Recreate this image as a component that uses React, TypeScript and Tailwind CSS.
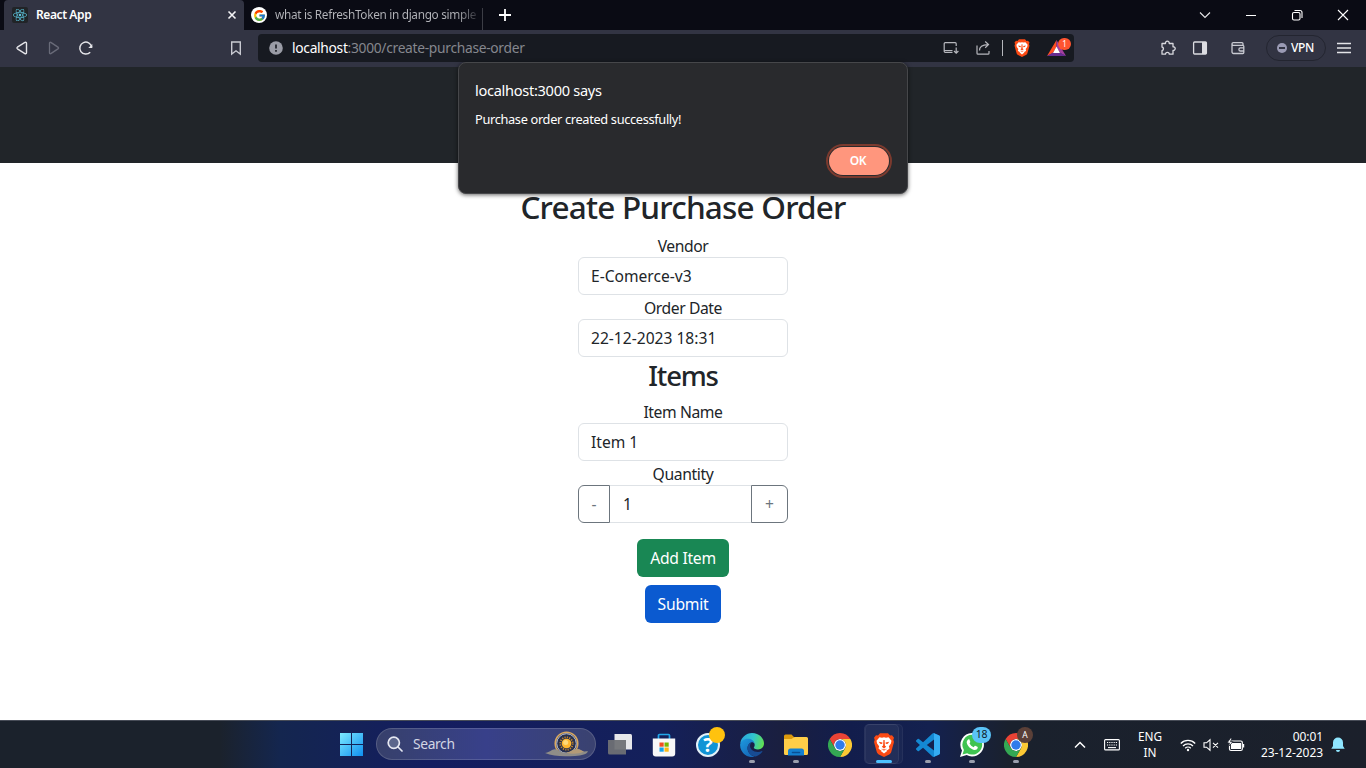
import type { ReactNode } from 'react';
import { FaReact } from 'react-icons/fa';
import { FcGoogle } from 'react-icons/fc';

function BraveIcon({ className }: { className: string }) {
  return (
    <svg viewBox="0 0 24 24" className={className}>
      <path fill="#fb4a14" d="M8 .3h8l2 2.200 2-.3 2 2.600-.7 2 .7 2.200-2.700 9.700c-.4 1.400-1.100 2-2.100 2.700L12 23.900l-5.200-2.500c-1-.7-1.700-1.300-2.100-2.700L2 9l.7-2.200-.7-2 2-2.600 2 .3z" />
      <path fill="#fff" d="M7.500 4.200l2.500.5 2-.5 2 .5 2.500-.5 3 3.600-.6 2.700-2 2.700.6 2.300-2 1.800-1.300-.7 1 1.500L12 20.500l-3.200-2.400 1-1.500-1.300.7-2-1.800.6-2.300-2-2.700-.6-2.700z" />
      <path fill="#fb4a14" d="M6.800 8.700l3.700.7-.4 1.700-2-.4zM17.200 8.700l-3.700.7.400 1.700 2-.4zM11.400 7h1.200l.3 5.500 1.300 1.300L12 15.400l-2.200-1.600 1.300-1.300zM9.300 15.400l2.700 1.200 2.700-1.200-2.700 2.300z" />
    </svg>
  );
}

function ChromeIcon() {
  return (
    <svg viewBox="0 0 48 48" className="size-6">
      <circle cx="24" cy="24" r="12" fill="#fff" />
      <path fill="#ea4335" d="M24,12H44.7812a23.9939,23.9939,0,0,0-41.5639.0029L13.6079,30l.0093-.0024A11.9852,11.9852,0,0,1,24,12Z" />
      <path fill="#fcc934" d="M34.3913,30.0029,24.0007,48A23.994,23.994,0,0,0,44.78,12.0031H23.9989l-.0025.0093A11.985,11.985,0,0,1,34.3913,30.0029Z" />
      <path fill="#34a853" d="M13.6086,30.0031,3.218,12.006A23.994,23.994,0,0,0,24.0025,48L34.3931,30.0029l-.0067-.0068a11.9852,11.9852,0,0,1-20.7778.007Z" />
      <circle cx="24" cy="24" r="9.5" fill="#2f7bea" />
    </svg>
  );
}

function EdgeIcon() {
  return (
    <svg viewBox="0 0 24 24" className="size-6">
      <defs>
        <linearGradient id="edgeTop" x1="0" y1="0.4" x2="1" y2="0.6">
          <stop offset="0" stopColor="#2aa5dd" />
          <stop offset="0.5" stopColor="#31c6cf" />
          <stop offset="1" stopColor="#62e04e" />
        </linearGradient>
        <linearGradient id="edgeBottom" x1="0" y1="0" x2="0.7" y2="1">
          <stop offset="0" stopColor="#1d9be0" />
          <stop offset="1" stopColor="#1567b8" />
        </linearGradient>
      </defs>
      <path fill="url(#edgeTop)" d="M.3 10.2C1.2 4.300 6.100 0 12 0c7.300 0 12 5.300 12 10.600 0 3.600-2.700 5.900-6 5.900-2.800 0-4.200-1-4.200-1.900 0-.6.900-.9.900-2.600C14.700 9.500 12 7.100 8.400 7.100 4.800 7.100 1.700 8.500.3 10.200z" />
      <path fill="url(#edgeBottom)" d="M.1 12.100C.3 8.400 3.800 5.700 8 5.700c3.400 0 6.100 2 6.600 5-.8-1.200-1.900-1.700-3-1.500C9.200 9.900 7.500 12.500 7.500 15c0 4.200 3.200 7.500 7.200 8.700A12 12 0 0 1 .1 12.100z" />
      <path fill="#174b93" d="M11.300 9.300C8.900 10.400 7.500 12.500 7.500 15c0 4.700 4 8.200 8.300 8.400 3.200-.8 5.400-3 6.600-4.800.2-.4-.1-.7-.5-.5-1.200.6-2.500.9-4 .9-4.900 0-8.300-3.300-7.800-6.700.2-1.200.8-2.200 1.200-3z" />
    </svg>
  );
}

function FolderIcon() {
  return (
    <svg viewBox="0 0 24 24" className="size-6">
      <path fill="#dd9a0c" d="M0 3a1.500 1.500 0 0 1 1.500-1.500h6L10 4v3H0z" />
      <path fill="#ffce48" d="M0 6h7.500l3-2H22.500A1.500 1.500 0 0 1 24 5.500v15a1.500 1.500 0 0 1-1.500 1.500h-21A1.500 1.500 0 0 1 0 20.500z" />
      <path fill="#1480d0" d="M4 22.500V18a2.500 2.500 0 0 1 2.500-2.500h11A2.500 2.500 0 0 1 20 18v4.500z" />
      <path stroke="#0a4f93" strokeWidth="1.600" strokeLinecap="round" d="M8.500 19.500h7" />
    </svg>
  );
}

function StoreIcon() {
  return (
    <svg viewBox="0 0 24 24" className="size-6">
      <path d="M6.500 6V2.500a1 1 0 0 1 1-1h9a1 1 0 0 1 1 1V6" fill="none" stroke="#22a7ea" strokeWidth="1.700" />
      <path fill="#f7f7f8" d="M.8 5.500h22.400v15A3 3 0 0 1 20.200 23.500H3.800a3 3 0 0 1-3-3z" />
      <path fill="#f04e23" d="M7.500 9.500h4.200v4.200H7.500z" />
      <path fill="#7ab800" d="M12.500 9.500h4.200v4.200h-4.200z" />
      <path fill="#15a3ec" d="M7.500 14.500h4.200v4.200H7.500z" />
      <path fill="#fdb813" d="M12.500 14.500h4.200v4.200h-4.200z" />
    </svg>
  );
}

function VsCodeIcon() {
  return (
    <svg viewBox="0 0 24 24" className="size-6">
      <path
        fill="#1489d3"
        d="M23.15 2.587L18.21.21a1.494 1.494 0 0 0-1.705.29l-9.46 8.63-4.12-3.128a.999.999 0 0 0-1.276.057L.327 7.261A1 1 0 0 0 .326 8.74L3.899 12 .326 15.26a1 1 0 0 0 .001 1.479L1.65 17.94a.999.999 0 0 0 1.276.057l4.12-3.128 9.46 8.63a1.492 1.492 0 0 0 1.704.29l4.942-2.377A1.5 1.5 0 0 0 24 20.06V3.939a1.5 1.5 0 0 0-.85-1.352zm-5.146 14.861L10.826 12l7.178-5.448v10.896z"
      />
      <path fill="#35adf3" d="M18.004.15l5.146 2.437A1.500 1.500 0 0 1 24 3.940v16.120a1.500 1.500 0 0 1-.85 1.350l-5.146 2.440z" />
    </svg>
  );
}

function WeatherIcon() {
  return (
    <svg viewBox="0 0 44 26" className="h-[26px] w-[44px]">
      <circle cx="21.500" cy="12.500" r="11.300" fill="#27304f" stroke="#d9a860" strokeWidth="1.500" />
      <circle cx="21.500" cy="12.500" r="9.800" fill="none" stroke="#cfd6ea" strokeWidth="0.900" />
      <circle cx="21.500" cy="12.500" r="6.200" fill="none" stroke="#c9872a" strokeWidth="1.800" strokeDasharray="1.200 1.200" />
      <circle cx="21.500" cy="12.500" r="4.800" fill="#ffb62e" />
      <circle cx="20.700" cy="11.500" r="2.500" fill="#ffd978" />
      <path d="M0 22c3-.6 5-1.800 7-3 3-1.500 5-.5 7 .7 3 1.600 6 2.800 10 1.200 4-1.700 5-2.900 8-3 3 0 4 1.500 6 2.300 2 .6 3 0 5 .1-1 3-6 4.200-13 4.600-10 .6-22 .8-30-2.900z" fill="#8f8d88" />
      <path d="M21 21.500c5-.4 6-3.500 11-3.600 3 .1 4 1.800 7 2.500-5 2.400-12 3.100-18 1.100z" fill="#b49b77" />
    </svg>
  );
}

function TaskCell({ children, mark }: { children: ReactNode; mark?: 'idle' | 'active' }) {
  return (
    <div className="relative flex h-full w-11 shrink-0 items-center justify-center">
      {children}
      {mark === 'idle' && <span className="absolute bottom-[5px] left-[19px] h-[3px] w-1.5 rounded-full bg-[#9a9fad]" />}
      {mark === 'active' && <span className="absolute bottom-[5px] left-[14px] h-[3px] w-4 rounded-full bg-[#4cc2ff]" />}
    </div>
  );
}

function TitleBar() {
  return (
    <header className="flex h-[30px] bg-[#0a0b14] pl-1">
      <div className="flex w-60 items-center rounded-t-[4px] bg-[#323443] pl-2 pr-[6px]">
        <span className="grid size-4 place-items-center rounded-[2px] bg-[#212427]">
          <FaReact className="size-[14px] text-[#5cc3dc]" />
        </span>
        <span className="ml-2 flex-1 whitespace-nowrap text-[12px] font-semibold tracking-[-0.4px] text-white">React App</span>
        <svg viewBox="0 0 12 12" className="size-3" stroke="#f4f4f6" strokeWidth="1.600">
          <path d="M2.500 2.500l7 7M9.500 2.500l-7 7" />
        </svg>
      </div>
      <div className="flex w-[239px] items-center pl-[7px]">
        <span className="grid size-4 shrink-0 place-items-center rounded-full bg-white">
          <FcGoogle className="size-[13px]" />
        </span>
        <span className="ml-2 flex-1 whitespace-nowrap bg-linear-to-r from-[#b4b5ba] from-90% to-[#b4b5ba]/20 bg-clip-text text-[11.8px] tracking-[-0.31px] text-transparent">
          what is RefreshToken in django simple
        </span>
        <span className="ml-[5px] mt-2 h-[22px] w-px bg-[#3c3d45]" />
      </div>
      <svg viewBox="0 0 12 12" className="ml-4 mt-[9px] size-3" stroke="#fff" strokeWidth="1.800">
        <path d="M6 0v12M0 6h12" />
      </svg>
      <div className="ml-auto flex text-white">
        <span className="grid w-[46px] place-items-center">
          <svg viewBox="0 0 12 8" className="h-2 w-3" fill="none" stroke="#e8e8ea" strokeWidth="1.100"><path d="M1 1.500l5 5 5-5" /></svg>
        </span>
        <span className="grid w-[46px] place-items-center"><span className="h-px w-2.5 bg-white" /></span>
        <span className="grid w-[46px] place-items-center">
          <svg viewBox="0 0 12 12" className="size-3" fill="none" stroke="#fff" strokeWidth="1.100">
            <rect x="1.500" y="3.500" width="7.500" height="7.500" rx="1.500" />
            <path d="M3.500 1.500h5.500a2 2 0 0 1 2 2V9" />
          </svg>
        </span>
        <span className="grid w-[46px] place-items-center">
          <svg viewBox="0 0 12 12" className="size-3" stroke="#fff" strokeWidth="1.100"><path d="M1 1l10 10M11 1L1 11" /></svg>
        </span>
      </div>
    </header>
  );
}

function Toolbar() {
  return (
    <div className="flex h-[37px] items-center bg-[#323443] pb-px pl-[6px]">
      <span className="grid w-8 place-items-center">
        <svg viewBox="0 0 14 16" className="h-4 w-3.5" fill="none" stroke="#e4e4e8" strokeWidth="1.400" strokeLinejoin="round">
          <path d="M11.500 3.200v9.600a1 1 0 0 1-1.600.8L2.400 8.800a1 1 0 0 1 0-1.600l7.500-4.800a1 1 0 0 1 1.600.8z" />
        </svg>
      </span>
      <span className="grid w-8 place-items-center">
        <svg viewBox="0 0 14 16" className="h-4 w-3.5" fill="none" stroke="#696b79" strokeWidth="1.300" strokeLinejoin="round">
          <path d="M2.500 3v10a.8.800 0 0 0 1.300.6l7.500-5a.8.800 0 0 0 0-1.200l-7.500-5A.8.800 0 0 0 2.500 3z" />
        </svg>
      </span>
      <span className="grid w-8 place-items-center">
        <svg viewBox="0 0 16 16" className="size-4" fill="none" stroke="#e4e4e8" strokeWidth="1.500">
          <path d="M12.200 12.200A6 6 0 1 1 13.700 7" />
          <path d="M14.300 4v4h-4z" fill="#e4e4e8" stroke="none" />
        </svg>
      </span>
      <span className="ml-[118px] grid w-8 place-items-center">
        <svg viewBox="0 0 12 16" className="h-4 w-3" fill="none" stroke="#c9cad2" strokeWidth="1.400"><path d="M1.700 2h8.600v12L6 10.800 1.700 14z" /></svg>
      </span>
      <div className="ml-[6px] flex h-7 w-[816px] items-center rounded-[4px] bg-[#171a21] pl-[11px] pr-0.5">
        <svg viewBox="0 0 14 14" className="size-3.5"><circle cx="7" cy="7" r="6.800" fill="#9a9ca6" /><path d="M7 3.500v4M7 9v1.700" stroke="#171a21" strokeWidth="1.600" /></svg>
        <span className="ml-[9px] flex-1 text-[13.8px] tracking-[-0.3px] text-[#85878e]"><span className="text-white">localhost</span>:3000/create-purchase-order</span>
        <svg viewBox="0 0 16 14" className="h-3.5 w-4" fill="none" stroke="#b6b7bd" strokeWidth="1.200">
          <path d="M9.500 11.300H2.200a1 1 0 0 1-1-1V2.700a1 1 0 0 1 1-1h10a1 1 0 0 1 1 1V5M1.500 9.500h8M13.200 6.500v5.500M11 10l2.200 2.200L15.400 10" />
        </svg>
        <svg viewBox="0 0 16 16" className="ml-4 size-4" fill="none" stroke="#b6b7bd" strokeWidth="1.200">
          <path d="M2 5.500v7.700a1 1 0 0 0 1 1h10a1 1 0 0 0 1-1V11M4.500 10.500C4.500 7 7 4.600 13 4.600M10.200 1.500l3.300 3.100-3.300 3.100" />
        </svg>
        <span className="ml-[11px] h-4 w-px bg-[#b6b7bd]" />
        <BraveIcon className="ml-[10px] h-[18px] w-[18px]" />
        <span className="relative ml-4 h-[18px] w-[25px]">
          <svg viewBox="0 0 20 18" className="h-[18px] w-5">
            <path fill="#ff4e22" d="M9.500 1L0 17l6-3 3.500-6z" />
            <path fill="#a33fa0" d="M9.500 1L19 17l-6-3-3.500-6z" />
            <path fill="#662d91" d="M0 17h19l-6-3.500H6z" />
            <path fill="#fff" d="M9.500 7.500L13 14H6z" />
          </svg>
          <span className="absolute -top-px left-[11px] grid h-3 w-[13px] place-items-center rounded-full bg-[#ff5430] text-[8px] leading-none text-white">1</span>
        </span>
      </div>
      <svg viewBox="0 0 16 16" className="ml-[86px] size-4" fill="none" stroke="#d8d8de" strokeWidth="1.300" strokeLinejoin="round">
        <path d="M2 3.500h3.500a1.900 1.900 0 1 1 3.700 0H13v3.300a1.800 1.800 0 1 1 0 3.500v3.900H9.300a1.900 1.900 0 0 0-3.800 0H2v-3.500a1.900 1.900 0 0 0 0-3.700z" />
      </svg>
      <svg viewBox="0 0 16 14" className="ml-4 h-3.5 w-4"><rect x="1.600" y="1" width="12.800" height="12" rx="1" fill="none" stroke="#dcdce1" strokeWidth="1.300" /><path d="M10 1h4.500v12H10z" fill="#dcdce1" /></svg>
      <svg viewBox="0 0 16 14" className="ml-[22px] h-3.5 w-4" fill="none" stroke="#c9cad2" strokeWidth="1.300">
        <path d="M13 4V2.700a1 1 0 0 0-1-1H3.300a1.300 1.300 0 0 0 0 2.600h9.500a1 1 0 0 1 1 1v6.200a1 1 0 0 1-1 1H3.500A1.500 1.500 0 0 1 2 11V3M14 6.800h-3.500a1.600 1.600 0 0 0 0 3.200H14" />
      </svg>
      <div className="ml-5 flex h-[26px] w-[60px] items-center rounded-full border border-[#232530] pl-[10px]">
        <span className="grid size-2.5 place-items-center rounded-full bg-[#9a9ab4]"><span className="h-[1.500px] w-1.5 bg-[#323443]" /></span>
        <span className="ml-1 text-[12px] font-medium tracking-[-0.4px] text-white">VPN</span>
      </div>
      <svg viewBox="0 0 14 12" className="ml-[11px] h-3 w-3.5" stroke="#e4e4e8" strokeWidth="1.300"><path d="M0 1.500h14M0 6h14M0 10.500h14" /></svg>
    </div>
  );
}

function Dialog() {
  return (
    <div role="alertdialog" className="absolute left-[458px] top-[62px] h-[132px] w-[450px] rounded-[8px] border border-[#46474a] bg-[#292a2d] pl-4 pr-[15px] pt-[17px] text-white shadow-[0_1px_4px_rgba(0,0,0,0.6)]">
      <p className="text-[14.6px] leading-[20px] tracking-[-0.3px]">localhost:3000 says</p>
      <p className="mt-[10px] text-[12.8px] leading-[18px] tracking-[-0.34px]">Purchase order created successfully!</p>
      <div className="mt-4 flex justify-end">
        <button className="h-[34px] w-[66px] rounded-full border-2 border-[#7b3a2e] p-px">
          <span className="grid h-full w-full place-items-center rounded-full bg-[#ff967d] pr-0.5 text-[12px] font-semibold tracking-[-0.4px] text-white">OK</span>
        </button>
      </div>
    </div>
  );
}

function Field({ label, value }: { label: string; value: string }) {
  return (
    <div className="w-[210px]">
      <div className="h-6 text-center text-[15.7px] leading-[26px] tracking-[-0.42px]">{label}</div>
      <div className="flex h-[38px] items-center rounded-[6px] border border-[#dee2e6] pl-3 pt-0.5 text-[15.6px]">{value}</div>
    </div>
  );
}

function OrderForm() {
  return (
    <main className="flex h-[557px] flex-col items-center bg-white pt-6 text-[#212529]">
      <h2 className="mb-2 h-[38px] text-[31.5px] font-medium leading-[40px] tracking-[-0.8px]">Create Purchase Order</h2>
      <Field label="Vendor" value="E-Comerce-v3" />
      <Field label="Order Date" value="22-12-2023 18:31" />
      <h3 className="mb-2 h-[34px] text-[27.5px] font-medium leading-[37px] tracking-[-1.2px]">Items</h3>
      <Field label="Item Name" value="Item 1" />
      <div className="h-6 text-[15.7px] leading-[26px] tracking-[-0.35px]">Quantity</div>
      <div className="flex h-[38px] w-[210px] text-[15.6px]">
        <button className="w-8 rounded-l-[6px] border border-[#6c757d] pt-0.5 text-[#6c757d]">-</button>
        <div className="flex flex-1 items-center border-y border-[#dee2e6] pl-[13px] pt-0.5">1</div>
        <button className="w-[37px] rounded-r-[6px] border border-[#6c757d] pt-0.5 text-[#6c757d]">+</button>
      </div>
      <button className="mt-4 h-[38px] w-[92px] rounded-[6px] bg-[#198754] pt-0.5 text-[15.7px] tracking-[-0.3px] text-white">Add Item</button>
      <button className="mt-2 h-[38px] w-[76px] rounded-[6px] bg-[#0b5ad0] pt-0.5 text-[15.7px] tracking-[-0.25px] text-white">Submit</button>
    </main>
  );
}

function Taskbar() {
  return (
    <footer className="flex h-12 items-center border-t border-[#474c57] bg-linear-[90deg,#1b222c_0px,#1b222c_220px,#14264f_280px,#141d60_430px,#14205a_660px,#1a1f40_780px,#121d4c_850px,#14214f_930px,#1a212d_1010px,#1b202b_1366px] pl-[329px] text-white">
      <TaskCell>
        <svg viewBox="0 0 24 24" className="size-6">
          <defs><linearGradient id="winLogo" x1="0" y1="0" x2="1" y2="1"><stop stopColor="#7deaff" /><stop offset="1" stopColor="#0f8ff0" /></linearGradient></defs>
          <path fill="url(#winLogo)" d="M1 0h11v11H1zM13 0h11v11H13zM1 12h11v11H1zM13 12h11v11H13z" />
        </svg>
      </TaskCell>
      <div className="relative -top-px ml-[3px] mr-0.5 flex h-8 w-[220px] shrink-0 items-center rounded-full border border-white/15 bg-linear-to-r from-[#37406b] via-[#38408a] to-[#3a4270] pl-[10px] pr-[6px]">
        <svg viewBox="0 0 16 16" className="size-4" fill="none" stroke="#e6e8f2" strokeWidth="1.700"><circle cx="6.800" cy="6.800" r="5.600" fill="#5c668c" /><path d="M11 11l4 4" strokeLinecap="round" /></svg>
        <span className="ml-[10px] flex-1 pt-0.5 text-[13.800px] tracking-[-0.35px] text-[#d3d6e4]">Search</span>
        <WeatherIcon />
      </div>
      <TaskCell>
        <svg viewBox="0 0 24 24" className="size-6"><path fill="#e6e7ea" d="M6.500 1h16a1.500 1.500 0 0 1 1.500 1.500v14H6.500z" /><path fill="#6f7175" fillOpacity=".94" d="M0 7h18v14.500H1.500A1.500 1.500 0 0 1 0 20z" /></svg>
      </TaskCell>
      <TaskCell><StoreIcon /></TaskCell>
      <TaskCell>
        <span className="grid size-6 place-items-center rounded-full border-2 border-[#e4f1f8] bg-[#1194d6] text-[20px] font-bold leading-none">?</span>
        <span className="absolute left-[23px] top-[6px] size-4 rounded-full bg-[#ffc20e]" />
      </TaskCell>
      <TaskCell mark="idle"><EdgeIcon /></TaskCell>
      <TaskCell mark="idle"><FolderIcon /></TaskCell>
      <TaskCell><ChromeIcon /></TaskCell>
      <TaskCell mark="active">
        <span className="absolute left-[3px] top-[3px] h-10 w-[38px] rounded-[5px] border border-white/5 bg-white/3" />
        <span className="absolute left-[2px] top-[3px] h-10 w-[35px] rounded-[5px] border border-white/6 bg-white/4" />
        <BraveIcon className="relative size-6" />
      </TaskCell>
      <TaskCell mark="idle"><VsCodeIcon /></TaskCell>
      <TaskCell mark="idle">
        <svg viewBox="0 0 24 24" className="size-6">
          <path fill="#fff" d="M12.300 0A11.700 11.700 0 1 1 6.700 22L0 24l2-6.500A11.700 11.700 0 0 1 12.300 0z" />
          <path fill="#3fc351" d="M12.300 1.800a9.900 9.900 0 1 1-5.100 18.400l-4.700 1.300 1.400-4.600A9.900 9.900 0 0 1 12.300 1.800z" />
          <path fill="#fff" d="M8.300 6.500c.5-.3 1-.2 1.200.3l.8 1.900c.1.300 0 .6-.8 1.500.9 1.900 2.300 3.200 4.200 4 1-1.300 1.200-1.500 1.500-1.400l2.200 1c.4.200.5.500.3 1.200-.4 1.300-1.700 2-3 1.900-3.700-.5-7.500-4-8-7.500 0-1.200.7-2.300 1.600-2.900z" />
        </svg>
        <span className="absolute left-[22px] top-[6px] grid h-4 w-[19px] place-items-center rounded-full bg-[#5ac3f7] text-[10.5px] tracking-[-0.3px] text-[#10202c]">18</span>
      </TaskCell>
      <TaskCell mark="idle">
        <ChromeIcon />
        <span className="absolute left-[23px] top-[6px] grid size-4 place-items-center rounded-full bg-[#5b4038] text-[8.500px]">A</span>
      </TaskCell>
      <span className="ml-[26px] grid w-8 place-items-center"><svg viewBox="0 0 12 8" className="h-2 w-3" fill="none" stroke="#fff" strokeWidth="1.500"><path d="M1 6.500l5-5 5 5" /></svg></span>
      <span className="grid w-8 place-items-center">
        <svg viewBox="0 0 16 12" className="h-3 w-4" fill="none" stroke="#fff" strokeWidth="1.100"><rect x=".6" y=".6" width="14.800" height="10.300" rx="1" /><path d="M3 3.500h10M3 6h10" strokeDasharray="1.200 1" /><path d="M4 8.600h8" /></svg>
      </span>
      <span className="w-11 pb-0.5 text-center text-[11.8px] leading-4 tracking-[-0.1px]">ENG<br />IN</span>
      <svg viewBox="0 0 16 14" className="ml-2 h-3.5 w-4" fill="none" stroke="#fff" strokeWidth="1.300">
        <path d="M.8 5.500a10 10 0 0 1 14.400 0M3 8a7 7 0 0 1 10 0M5.200 10.300a4 4 0 0 1 5.600 0" /><circle cx="8" cy="12" r="1.200" fill="#fff" stroke="none" />
      </svg>
      <svg viewBox="0 0 16 14" className="ml-[7px] h-3.5 w-4" fill="none" stroke="#fff" strokeWidth="1.100"><path d="M1 4.800h2.500L7 1.800v10.400L3.500 9.200H1zM10 4.800l5 4.800M15 4.800L10 9.600" /></svg>
      <svg viewBox="0 0 18 14" className="ml-2 h-3.5 w-[18px]">
        <rect x="2.500" y="3" width="12.800" height="9.500" rx="1.500" fill="none" stroke="#fff" strokeWidth="1.200" /><path fill="#fff" d="M4 5h10v6H4zM16 6h1.200v3.500H16z" />
        <path fill="#fff" stroke="#1b202b" strokeWidth=".8" d="M3.500 0L0 5h2.500L1.500 8.500 6 3.700H3.500L5 0z" />
      </svg>
      <span className="w-[78px] text-right text-[12px] leading-4 tracking-[-0.06px]">00:01<br />23-12-2023</span>
      <svg viewBox="0 0 14 16" className="ml-2 h-4 w-3.5" fill="#8fe6ff"><path d="M7 .5a5 5 0 0 0-5 5V9L.3 11.800h13.400L12 9V5.500a5 5 0 0 0-5-5zM5 13h4a2 2 0 0 1-4 0z" /></svg>
    </footer>
  );
}

export default function App() {
  return (
    <div className="relative flex h-[768px] w-[1366px] flex-col overflow-hidden font-['Noto_Sans',sans-serif]">
      <TitleBar />
      <Toolbar />
      <nav className="h-24 bg-[#212529]" />
      <OrderForm />
      <Taskbar />
      <Dialog />
    </div>
  );
}
